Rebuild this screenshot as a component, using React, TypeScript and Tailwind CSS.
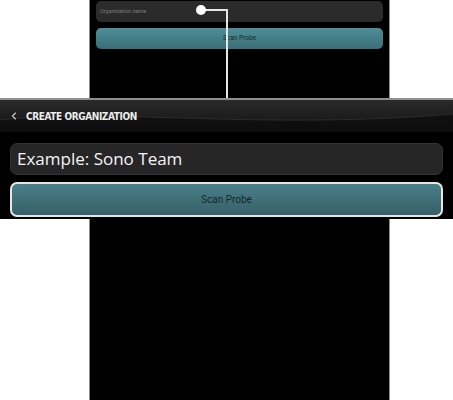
import { ChevronLeft } from "lucide-react";

const SANS = { fontFamily: "Roboto, 'Liberation Sans', sans-serif" };

function PhoneScreen() {
  return (
    <div className="ml-[89px] flex h-full w-[301px] flex-col border-x border-[#8a8a8a] bg-black px-[6px]">
      {/* org name field */}
      <div className="mt-px flex h-[21px] items-center rounded-[5px] bg-[#2b2b2b] px-[4px]">
        <span className="text-[5.5px] text-[#7a7a7a]" style={SANS}>
          Organization name
        </span>
      </div>
      <div className="mt-[6px] flex h-[21px] items-center justify-center rounded-[5px] bg-gradient-to-b from-[#4d8f99] to-[#3a6e77]">
        <span className="text-[6.5px] text-[#1b2a2d]" style={SANS}>
          Scan Probe
        </span>
      </div>
    </div>
  );
}

function Callout() {
  return (
    <div className="absolute left-0 top-[98px] flex h-[121px] w-full flex-col border-t-2 border-[#8f8f8f] bg-black">
      {/* header bar */}
      <div className="relative flex h-[32px] items-center gap-[6px] overflow-hidden bg-gradient-to-b from-[#2a2a2a] to-[#121212] px-[8px]">
        <svg className="absolute inset-0" width="453" height="32" viewBox="0 0 453 32">
          <path d="M0 20 C120 8 260 30 453 14 L453 32 L0 32 Z" fill="#0b0b0b" opacity="0.7" />
          <path d="M0 20 C120 8 260 30 453 14" stroke="#3a3a3a" strokeWidth="1" fill="none" opacity="0.6" />
        </svg>
        <ChevronLeft className="relative h-[12px] w-[12px] text-[#cfcfcf]" strokeWidth={2.2} />
        <span
          className="relative text-[10px] font-bold tracking-[-0.4px] text-[#ececec]"
          style={{ fontFamily: "'DejaVu Sans Condensed', Roboto, sans-serif" }}
        >
          CREATE ORGANIZATION
        </span>
      </div>
      <div className="flex flex-col px-[10px] pt-[11px]">
        <div className="flex h-[32px] items-center rounded-[7px] border border-[#333] bg-[#262626] px-[6px]">
          <span className="text-[17px] text-[#f4f4f4]" style={{ fontFamily: "'Open Sans', sans-serif" }}>
            Example: Sono Team
          </span>
        </div>
        <div className="mt-[7px] flex h-[35px] items-center justify-center rounded-[7px] border-2 border-[#e6e6e6] bg-gradient-to-b from-[#4a8089] to-[#366068]">
          <span className="text-[10px] text-[#17272a]" style={SANS}>
            Scan Probe
          </span>
        </div>
      </div>
    </div>
  );
}

function Connector() {
  return (
    <svg className="absolute left-0 top-0" width="453" height="100" viewBox="0 0 453 100">
      <path d="M201 10 H227 V100" stroke="#e6e6e6" strokeWidth="2" fill="none" />
      <circle cx="201" cy="10" r="5" fill="#ffffff" />
    </svg>
  );
}

export default function App() {
  return (
    <div className="relative h-[400px] w-[453px] overflow-hidden bg-white">
      <PhoneScreen />
      <Connector />
      <Callout />
    </div>
  );
}
